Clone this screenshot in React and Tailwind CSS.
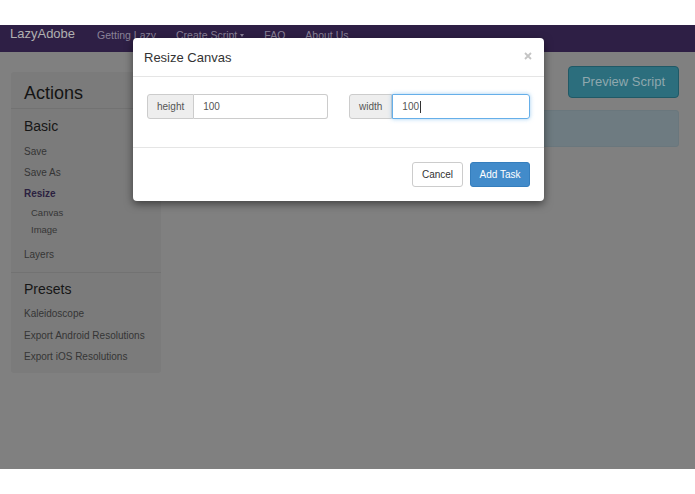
import React from "react";

const font = { fontFamily: '"Liberation Sans", Arial, sans-serif' };

function Sidebar() {
  return (
    <div className="w-[150px] h-[301px] mt-[20px] bg-[#7b7b7b] rounded-[3px] flex flex-col">
      <div className="h-[37px] border-b border-[#727272] px-[13px] pt-[10px] text-[18px] leading-[22px] text-[#141414]">Actions</div>
      <div className="px-[13px] pt-[9px] text-[14px] leading-[17px] text-[#161616]">Basic</div>
      <div className="flex flex-col px-[13px] pt-[11px] text-[10px] leading-[12px] text-[#353535] gap-[9px]">
        <div>Save</div>
        <div>Save As</div>
        <div className="font-bold text-[#2b2140]">Resize</div>
      </div>
      <div className="flex flex-col pl-[20px] pt-[7px] text-[9.5px] leading-[11px] text-[#363636] gap-[6px]">
        <div>Canvas</div>
        <div>Image</div>
      </div>
      <div className="px-[13px] pt-[14px] pb-[11px] text-[10px] leading-[12px] text-[#353535] border-b border-[#727272]">Layers</div>
      <div className="px-[13px] pt-[8px] text-[14px] leading-[17px] text-[#161616]">Presets</div>
      <div className="flex flex-col px-[13px] pt-[10px] text-[10px] leading-[12px] text-[#353535] gap-[9.5px]">
        <div>Kaleidoscope</div>
        <div>Export Android Resolutions</div>
        <div>Export iOS Resolutions</div>
      </div>
    </div>
  );
}

function InputGroup({ label, value, focused }) {
  return (
    <div className="flex h-[25px] w-[181px]">
      <div className="flex items-center px-[9px] bg-[#eeeeee] border border-[#cccccc] rounded-l-[3px] text-[10px] text-[#555555]">{label}</div>
      {focused ? (
        <div className="flex-1 flex items-center pl-[9px] border border-[#66afe9] rounded-r-[3px] shadow-[0_0_4px_#66afe999] text-[10px] text-[#555555]">
          {value}
          <span className="ml-[1px] w-px h-[12px] bg-[#333333]" />
        </div>
      ) : (
        <div className="flex-1 flex items-center pl-[9px] border border-l-0 border-[#cccccc] rounded-r-[3px] text-[10px] text-[#555555]">{value}</div>
      )}
    </div>
  );
}

function Modal() {
  return (
    <div className="absolute left-[133px] top-[13px] w-[411px] bg-white rounded-[4px] shadow-[0_3px_9px_#00000080] flex flex-col">
      <div className="h-[39px] border-b border-[#e5e5e5] flex items-center justify-between px-[11px]">
        <div className="text-[13px] text-[#333333] pt-[1px]">Resize Canvas</div>
        <svg width="8" height="8" viewBox="0 0 8 8" className="mt-[-3px] mr-[1px]">
          <path d="M1 1L7 7M7 1L1 7" stroke="#c4c4c4" strokeWidth="1.8" />
        </svg>
      </div>
      <div className="h-[71px] border-b border-[#e5e5e5] flex justify-between px-[14px] pt-[17px]">
        <InputGroup label="height" value="100" />
        <InputGroup label="width" value="100" focused />
      </div>
      <div className="h-[53px] flex justify-end items-start gap-[7px] pt-[14px] pr-[14px]">
        <div className="h-[25px] w-[51px] flex items-center justify-center border border-[#cccccc] rounded-[3px] text-[10px] text-[#333333]">Cancel</div>
        <div className="h-[25px] w-[60px] flex items-center justify-center bg-[#428bca] border border-[#357ebd] rounded-[3px] text-[10px] text-white">Add Task</div>
      </div>
    </div>
  );
}

export default function App() {
  return (
    <div className="w-[695px] h-[494px] bg-white flex flex-col" style={font}>
      <div className="h-[25px]" />
      <div className="relative h-[444px] bg-[#808080] flex flex-col">
        <div className="h-[27px] bg-[#2e1f45] flex items-start pt-[1px] pl-[10px] gap-[22px]">
          <div className="text-[13px] leading-[16px] text-[#b0b0b0]">LazyAdobe</div>
          <div className="flex gap-[20px] text-[10.5px] leading-[16px] text-[#8a8298] pt-[1px]">
            <span>Getting Lazy</span>
            <span className="flex items-center gap-[3px]">
              Create Script
              <span className="w-0 h-0 border-x-[2.5px] border-x-transparent border-t-[3px] border-t-[#8a8298]" />
            </span>
            <span>FAQ</span>
            <span>About Us</span>
          </div>
        </div>
        <div className="flex pl-[11px] pr-[16px]">
          <Sidebar />
          <div className="flex-1 ml-[19px] mt-[14px] flex flex-col">
            <div className="flex justify-end">
              <div className="h-[32px] w-[111px] flex items-center justify-center bg-[#2c6e7d] border border-[#205966] rounded-[4px] text-[13px] text-[#8fa8ae]">Preview Script</div>
            </div>
            <div className="h-[37px] mt-[12px] bg-[#6e7b81] border border-[#6a777d] rounded-[3px]" />
          </div>
        </div>
        <Modal />
      </div>
      <div className="h-[25px]" />
    </div>
  );
}
